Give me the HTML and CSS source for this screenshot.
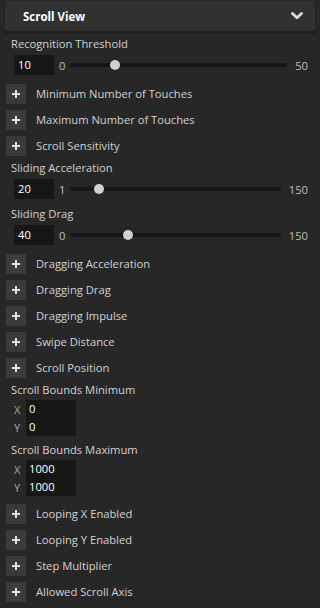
FILE: index.html
```html
<!DOCTYPE html>
<html lang="en">
<head>
    <meta charset="UTF-8">
    <meta name="viewport" content="width=device-width, initial-scale=1.0">
    <title>Scroll View</title>
    <link rel="stylesheet" href="styles.css">
</head>
<body>
    <div class="panel">
        <div class="panel-header">
            <span class="panel-title">Scroll View</span>
            <svg class="chevron" width="12" height="8" viewBox="0 0 12 8">
                <path d="M1.5 1.5 L6 5.8 L10.5 1.5" fill="none" stroke="#dcdcdc" stroke-width="2.8" stroke-linecap="round" stroke-linejoin="round"/>
            </svg>
        </div>

        <div class="panel-body">
            <div class="field">
                <div class="field-label">Recognition Threshold</div>
                <div class="slider-row">
                    <div class="num-input">10</div>
                    <span class="range-min">0</span>
                    <div class="track"><div class="thumb" style="left: 20%"></div></div>
                    <span class="range-max">50</span>
                </div>
            </div>

            <div class="prop"><span class="plus-btn"></span><span class="prop-label">Minimum Number of Touches</span></div>
            <div class="prop"><span class="plus-btn"></span><span class="prop-label">Maximum Number of Touches</span></div>
            <div class="prop"><span class="plus-btn"></span><span class="prop-label">Scroll Sensitivity</span></div>

            <div class="field">
                <div class="field-label">Sliding Acceleration</div>
                <div class="slider-row">
                    <div class="num-input">20</div>
                    <span class="range-min">1</span>
                    <div class="track"><div class="thumb" style="left: 12.75%"></div></div>
                    <span class="range-max">150</span>
                </div>
            </div>

            <div class="field">
                <div class="field-label">Sliding Drag</div>
                <div class="slider-row">
                    <div class="num-input">40</div>
                    <span class="range-min">0</span>
                    <div class="track"><div class="thumb" style="left: 26.67%"></div></div>
                    <span class="range-max">150</span>
                </div>
            </div>

            <div class="prop"><span class="plus-btn"></span><span class="prop-label">Dragging Acceleration</span></div>
            <div class="prop"><span class="plus-btn"></span><span class="prop-label">Dragging Drag</span></div>
            <div class="prop"><span class="plus-btn"></span><span class="prop-label">Dragging Impulse</span></div>
            <div class="prop"><span class="plus-btn"></span><span class="prop-label">Swipe Distance</span></div>
            <div class="prop"><span class="plus-btn"></span><span class="prop-label">Scroll Position</span></div>

            <div class="field vec-field">
                <div class="field-label">Scroll Bounds Minimum</div>
                <div class="vec">
                    <div class="vec-row"><span class="axis">X</span><span class="vec-value">0</span></div>
                    <div class="vec-row"><span class="axis">Y</span><span class="vec-value">0</span></div>
                </div>
            </div>

            <div class="field vec-field">
                <div class="field-label">Scroll Bounds Maximum</div>
                <div class="vec">
                    <div class="vec-row"><span class="axis">X</span><span class="vec-value">1000</span></div>
                    <div class="vec-row"><span class="axis">Y</span><span class="vec-value">1000</span></div>
                </div>
            </div>

            <div class="prop"><span class="plus-btn"></span><span class="prop-label">Looping X Enabled</span></div>
            <div class="prop"><span class="plus-btn"></span><span class="prop-label">Looping Y Enabled</span></div>
            <div class="prop"><span class="plus-btn"></span><span class="prop-label">Step Multiplier</span></div>
            <div class="prop"><span class="plus-btn"></span><span class="prop-label">Allowed Scroll Axis</span></div>
        </div>
    </div>
</body>
</html>
```

FILE: styles.css
```css
* {
    margin: 0;
    padding: 0;
    box-sizing: border-box;
}

body {
    font-family: 'Open Sans', 'Liberation Sans', sans-serif;
    font-size: 11.2px;
    background: #272727;
    color: #d2d2d2;
    height: 608px;
    overflow: hidden;
}

.panel {
    padding-top: 1px;
}

.panel-header {
    margin: 0 5px;
    height: 31px;
    background: #313131;
    border-bottom: 1px solid #1e1e1e;
    box-shadow: 0 1px 2px rgba(0, 0, 0, 0.35);
    display: flex;
    align-items: center;
    justify-content: space-between;
    padding: 0 12px 0 18px;
}

.panel-title {
    color: #ffffff;
    font-weight: 700;
    font-size: 11.5px;
}

.chevron {
    display: block;
}

.panel-body {
    padding-top: 3px;
}

/* labelled fields */
.field {
    padding-bottom: 6px;
}

.field-label {
    height: 18px;
    line-height: 18px;
    padding-left: 11px;
}

.slider-row {
    margin-top: 2px;
    height: 20px;
    display: flex;
    align-items: center;
    padding: 0 12px 0 14px;
}

.num-input {
    width: 40px;
    height: 20px;
    background: #161616;
    color: #ffffff;
    line-height: 20px;
    padding-left: 4px;
}

.range-min {
    margin-left: 5px;
    width: 11px;
    color: #bdbdbd;
}

.track {
    flex: 1;
    height: 4px;
    background: #161616;
    border-radius: 2px;
    position: relative;
    margin: 0 8px 0 0;
}

.thumb {
    position: absolute;
    top: 50%;
    width: 10px;
    height: 10px;
    margin-left: 2px;
    border-radius: 50%;
    background: #d0d0d0;
    transform: translate(-50%, -50%);
}

.range-max {
    color: #bdbdbd;
}

/* collapsed properties */
.prop {
    height: 26px;
    display: flex;
    align-items: center;
    padding-left: 6px;
}

.prop-label {
    margin-top: -2px;
}

.plus-btn {
    position: relative;
    width: 20px;
    height: 20px;
    background: #3b3b3b;
    border-radius: 2px;
    margin-right: 10px;
}

.plus-btn::before,
.plus-btn::after {
    content: "";
    position: absolute;
    background: #e2e2e2;
}

.plus-btn::before {
    left: 6px;
    top: 9px;
    width: 8px;
    height: 2px;
}

.plus-btn::after {
    left: 9px;
    top: 6px;
    width: 2px;
    height: 8px;
}

/* vector fields */
.vec-field {
    padding-bottom: 5px;
}

.vec {
    margin-top: 1px;
    margin-left: 14px;
    width: 62px;
    display: flex;
    flex-direction: column;
}

.vec-row {
    height: 18px;
    display: flex;
    align-items: center;
}

.axis {
    width: 12px;
    color: #a8a8a8;
}

.vec-value {
    flex: 1;
    height: 18px;
    line-height: 18px;
    background: #161616;
    color: #ffffff;
    padding-left: 3px;
}
```
